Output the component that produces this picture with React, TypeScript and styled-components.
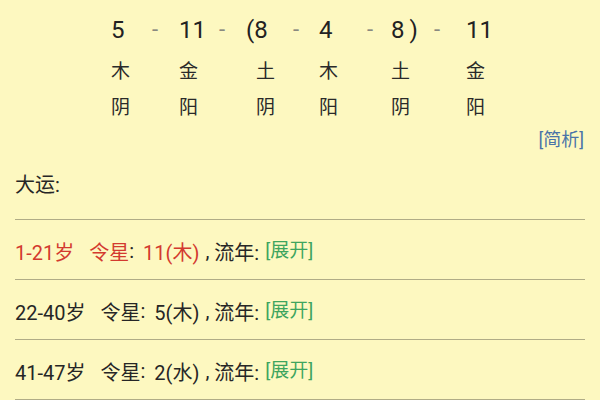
import React from 'react';
import styled, { createGlobalStyle } from 'styled-components';

const GlobalStyle = createGlobalStyle`
    html, body {
        margin: 0;
        padding: 0;
        background: #fdf8c0;
    }
    body {
        font-family: 'Roboto', 'Noto Sans CJK SC', sans-serif;
        color: #262626;
    }
`;

const Page = styled.div`
    width: 600px;
    height: 400px;
    overflow: hidden;
    background: #fdf8c0;
    display: flex;
    flex-direction: column;
`;

const Chart = styled.div`
    display: grid;
    grid-template-columns: 41px 27px 40px 27px 47px 26px 48px 24px 43px 32px 50px;
    grid-template-rows: 48px 36px 36px;
    padding: 6px 0 0 111px;
`;

const Num = styled.div<{ $col: number }>`
    grid-row: 1;
    grid-column: ${(p) => p.$col};
    font-size: 24px;
    line-height: 48px;
    color: #222;
    white-space: nowrap;
`;

const Dash = styled.div<{ $col: number }>`
    grid-row: 1;
    grid-column: ${(p) => p.$col};
    font-size: 22px;
    line-height: 48px;
    color: #8a8a80;
`;

const Cell = styled.div<{ $row: number; $col: number; $indent?: number }>`
    grid-row: ${(p) => p.$row};
    grid-column: ${(p) => p.$col};
    font-size: 19px;
    line-height: 36px;
    color: #2a2a2a;
    padding-left: ${(p) => p.$indent ?? 0}px;
`;

const LinkRow = styled.div`
    display: flex;
    justify-content: flex-end;
    padding: 4px 16px 0 0;
`;

const Link = styled.span<{ $tone: 'blue' | 'green' }>`
    font-size: ${(p) => (p.$tone === 'blue' ? 18 : 19)}px;
    line-height: 20px;
    color: ${(p) => (p.$tone === 'blue' ? '#4a74a8' : '#3ea55e')};
`;

const Section = styled.div`
    padding: 0 15px;
    display: flex;
    flex-direction: column;
`;

const Heading = styled.div`
    font-size: 20px;
    line-height: 24px;
    padding: 23px 0 22px;
    border-bottom: 1px solid #b0ac86;
`;

const Row = styled.div`
    height: 60px;
    display: flex;
    align-items: center;
    padding-top: 3px;
    box-sizing: border-box;
    font-size: 20px;
    border-bottom: 1px solid #b0ac86;
    color: #262626;
`;

const Age = styled.span<{ $active?: boolean }>`
    color: ${(p) => (p.$active ? '#d33a2f' : '#262626')};
    margin-right: 15px;
`;

const Star = styled.span<{ $active?: boolean }>`
    color: ${(p) => (p.$active ? '#d33a2f' : '#262626')};
`;

const Label = styled.span<{ $gap: number }>`
    margin-right: ${(p) => p.$gap}px;
`;

const Sep = styled.span`
    margin: 0 5px 0 6px;
`;

const cols = [
    { num: '5', wx: '木', yy: '阴' },
    { num: '11', wx: '金', yy: '阳' },
    { num: '(8', wx: '土', yy: '阴', indent: 10 },
    { num: '4', wx: '木', yy: '阳' },
    { num: '8\u2009)', wx: '土', yy: '阴' },
    { num: '11', wx: '金', yy: '阳' },
];

const periods = [
    { age: '1-21岁', star: '11(木)', active: true },
    { age: '22-40岁', star: '5(木)' },
    { age: '41-47岁', star: '2(水)' },
];

const App = () => {
    return (
        <Page>
            <GlobalStyle />
            <Chart>
                {cols.map((c, i) => (
                    <React.Fragment key={i}>
                        <Num $col={i * 2 + 1}>{c.num}</Num>
                        {i < cols.length - 1 && <Dash $col={i * 2 + 2}>-</Dash>}
                        <Cell $row={2} $col={i * 2 + 1} $indent={c.indent}>
                            {c.wx}
                        </Cell>
                        <Cell $row={3} $col={i * 2 + 1} $indent={c.indent}>
                            {c.yy}
                        </Cell>
                    </React.Fragment>
                ))}
            </Chart>
            <LinkRow>
                <Link $tone="blue">[简析]</Link>
            </LinkRow>
            <Section>
                <Heading>大运:</Heading>
                {periods.map((p) => (
                    <Row key={p.age}>
                        <Age $active={p.active}>{p.age}</Age>
                        <Star $active={p.active}>令星</Star>
                        <Label $gap={9}>:</Label>
                        <Star $active={p.active}>{p.star}</Star>
                        <Sep>,</Sep>
                        <Label $gap={6}>流年:</Label>
                        <Link $tone="green">[展开]</Link>
                    </Row>
                ))}
            </Section>
        </Page>
    );
};

export default App;
